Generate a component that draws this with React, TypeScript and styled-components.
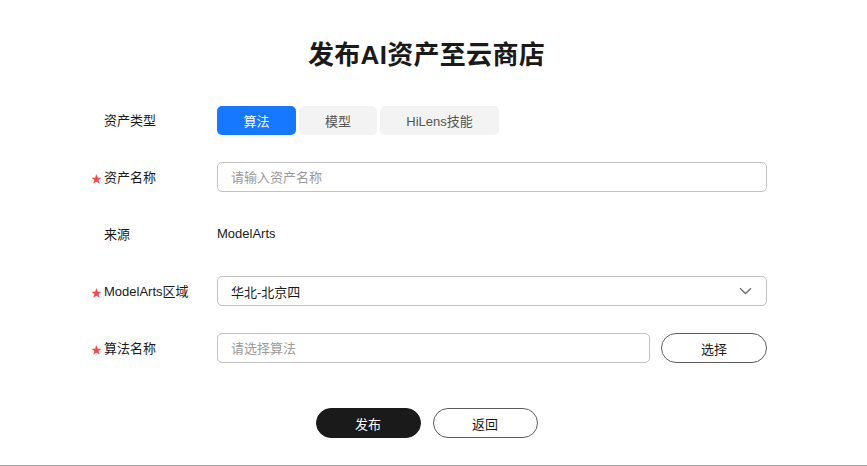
import React, { useState } from "react";
import styled, { createGlobalStyle } from "styled-components";

const Global = createGlobalStyle`
  html, body { margin: 0; padding: 0; background: #ffffff; }
  body { font-family: "Liberation Sans", "Noto Sans CJK SC", sans-serif; color: #1a1a1a; }
  * { box-sizing: border-box; }
`;

const Page = styled.div`
  width: 867px;
  height: 466px;
  border-bottom: 1px solid #a3a3a3;
  padding-top: 37px;
  padding-right: 14px;
  display: flex;
  flex-direction: column;
  align-items: center;
`;

const Title = styled.h1`
  margin: 0 0 31px;
  font-family: "Liberation Sans", "Noto Sans CJK SC", sans-serif;
  font-size: 26px;
  line-height: 37px;
  font-weight: 700;
  color: #1a1a1a;
  letter-spacing: 0.3px;
`;

const Form = styled.div`
  width: 867px;
  padding-left: 91px;
  display: flex;
  flex-direction: column;
  gap: 27px;
  align-self: flex-start;
`;

const Row = styled.div`
  display: grid;
  grid-template-columns: 126px 550px;
  align-items: center;
  height: 30px;
`;

const Label = styled.div`
  display: flex;
  align-items: center;
  font-size: 13px;
  color: #1a1a1a;
  padding-bottom: 2px;
`;

const Star = styled.span<{ $show: boolean }>`
  width: 13px;
  font-size: 11px;
  color: #f04a4a;
  visibility: ${(p) => (p.$show ? "visible" : "hidden")};
  padding-top: 3px;
`;

const Segments = styled.div`
  display: flex;
  gap: 3px;
`;

const Segment = styled.button<{ $active: boolean; $width: number }>`
  height: 29px;
  width: ${(p) => p.$width}px;
  padding: 0;
  border: none;
  border-radius: 5px;
  font-family: inherit;
  font-size: 13px;
  background: ${(p) => (p.$active ? "#1677ff" : "#f3f3f3")};
  color: ${(p) => (p.$active ? "#ffffff" : "#555555")};
  cursor: pointer;
`;

const Input = styled.input`
  width: 100%;
  height: 30px;
  border: 1px solid #c2c2c2;
  border-radius: 5px;
  padding: 0 13px;
  font-family: inherit;
  font-size: 13px;
  color: #1a1a1a;
  outline: none;
  &::placeholder { color: #9a9a9a; }
`;

const Value = styled.div`
  font-size: 13px;
  color: #1a1a1a;
  padding-bottom: 2px;
`;

const Select = styled.div`
  height: 30px;
  border: 1px solid #c2c2c2;
  border-radius: 5px;
  padding: 0 14px 0 13px;
  display: flex;
  align-items: center;
  justify-content: space-between;
  font-size: 13px;
  color: #1a1a1a;
`;

const Combo = styled.div`
  display: flex;
  gap: 11px;
`;

const PillButton = styled.button<{ $primary?: boolean; $width: number }>`
  width: ${(p) => p.$width}px;
  flex: none;
  height: 30px;
  border-radius: 15px;
  border: 1px solid ${(p) => (p.$primary ? "#1a1a1a" : "#5c5c5c")};
  background: ${(p) => (p.$primary ? "#1a1a1a" : "#ffffff")};
  color: ${(p) => (p.$primary ? "#ffffff" : "#1a1a1a")};
  font-family: inherit;
  font-size: 13px;
  cursor: pointer;
`;

const Actions = styled.div`
  margin-top: 45px;
  display: flex;
  gap: 12px;
  justify-content: center;
`;

const Chevron = () => (
  <svg width="13" height="8" viewBox="0 0 13 8" fill="none">
    <path d="M1 1.2 L6.5 6.5 L12 1.2" stroke="#6b6b6b" strokeWidth="1.3" />
  </svg>
);

const types = [
  { name: "算法", width: 79 },
  { name: "模型", width: 78 },
  { name: "HiLens技能", width: 119 },
];

export default function App() {
  const [active, setActive] = useState(0);
  return (
    <>
      <Global />
      <Page>
        <Title>发布AI资产至云商店</Title>
        <Form>
          <Row>
            <Label><Star $show={false}>★</Star>资产类型</Label>
            <Segments>
              {types.map((t, i) => (
                <Segment key={t.name} $width={t.width} $active={i === active} onClick={() => setActive(i)}>
                  {t.name}
                </Segment>
              ))}
            </Segments>
          </Row>
          <Row>
            <Label><Star $show>★</Star>资产名称</Label>
            <Input placeholder="请输入资产名称" />
          </Row>
          <Row>
            <Label><Star $show={false}>★</Star>来源</Label>
            <Value>ModelArts</Value>
          </Row>
          <Row>
            <Label><Star $show>★</Star>ModelArts区域</Label>
            <Select>
              <span>华北-北京四</span>
              <Chevron />
            </Select>
          </Row>
          <Row>
            <Label><Star $show>★</Star>算法名称</Label>
            <Combo>
              <Input placeholder="请选择算法" />
              <PillButton $width={106}>选择</PillButton>
            </Combo>
          </Row>
        </Form>
        <Actions>
          <PillButton $primary $width={105}>发布</PillButton>
          <PillButton $width={105}>返回</PillButton>
        </Actions>
      </Page>
    </>
  );
}
